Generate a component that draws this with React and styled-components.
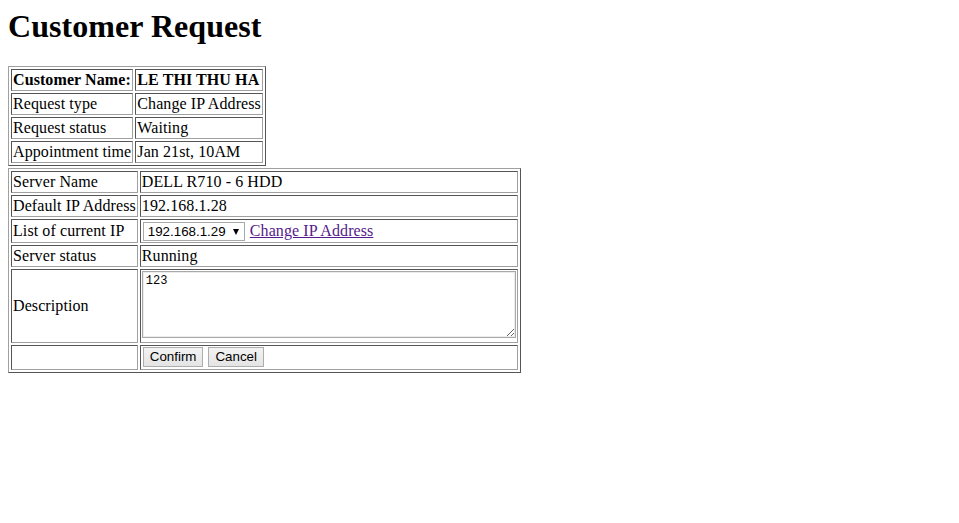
import React from "react";
import styled, { createGlobalStyle } from "styled-components";

const Global = createGlobalStyle`
  html, body { background: #fff; }
  body {
    margin: 8px;
    font-family: "Liberation Serif", "Times New Roman", serif;
    font-size: 16px;
    color: #000;
  }
`;

const Title = styled.h1`
  font-size: 32px;
  font-weight: bold;
  margin: 0 0 21px 0;
  line-height: 37px;
  letter-spacing: 0.05px;
`;

const Table = styled.table`
  border-style: solid;
  border-width: 1px;
  border-color: #a0a0a0 #555 #555 #a0a0a0;
  border-spacing: 2px;
  border-collapse: separate;
  font-size: 16px;
  letter-spacing: 0.09px;
  margin-top: ${(p) => p.$gap || "0"};
`;

const Cell = styled.td`
  border-style: solid;
  border-width: 1px;
  border-color: #555 #a0a0a0 #a0a0a0 #555;
  padding: 1px;
  line-height: 18px;
  font-weight: ${(p) => (p.$bold ? "bold" : "normal")};
  white-space: nowrap;
  vertical-align: middle;
`;

const SelectWrap = styled.span`
  position: relative;
  display: inline-block;
  vertical-align: middle;
  margin: 0 5px 0 1px;
  height: 19px;
`;

const Select = styled.select`
  appearance: none;
  -webkit-appearance: none;
  display: block;
  box-sizing: border-box;
  font-family: Arial, "Liberation Sans", sans-serif;
  font-size: 13.33px;
  letter-spacing: 0;
  height: 19px;
  width: 102px;
  border: 1px solid #a9a9a9;
  border-radius: 0;
  background: #fff;
  color: #000;
  padding: 0 0 0 4px;
  margin: 0;
`;

const Arrow = styled.span`
  position: absolute;
  right: 6px;
  top: 7px;
  width: 0;
  height: 0;
  border-left: 3.5px solid transparent;
  border-right: 3.5px solid transparent;
  border-top: 6px solid #000;
  pointer-events: none;
`;

const Link = styled.a`
  color: #551a8b;
  text-decoration: underline;
  vertical-align: middle;
`;

const TextArea = styled.textarea`
  display: block;
  box-sizing: border-box;
  width: 374px;
  height: 67px;
  margin: 0 0 3px 0;
  padding: 2px 3px;
  font-family: "Liberation Mono", "DejaVu Sans Mono", monospace;
  font-size: 12px;
  letter-spacing: 0;
  color: #000;
  border: 1px solid #a9a9a9;
  box-shadow: inset 0 0 0 1px #ececec;
  resize: both;
`;

const Button = styled.button`
  font-family: Arial, "Liberation Sans", sans-serif;
  font-size: 13.33px;
  letter-spacing: 0;
  height: 20px;
  padding: 0 6px;
  margin: 0 4px 1px 1px;
  border: 1px solid #adadad;
  border-radius: 0;
  background: linear-gradient(#f3f3f3, #e4e4e4);
  color: #000;
  vertical-align: middle;
`;

const Row = ({ label, children, bold }) => (
  <tr>
    <Cell $bold={bold}>{label}</Cell>
    <Cell $bold={bold}>{children}</Cell>
  </tr>
);

export default function App() {
  return (
    <>
      <Global />
      <Title>Customer Request</Title>
      <Table>
        <tbody>
          <Row label="Customer Name:" bold>LE THI THU HA</Row>
          <Row label="Request type">Change IP Address</Row>
          <Row label="Request status">Waiting</Row>
          <Row label="Appointment time">Jan 21st, 10AM</Row>
        </tbody>
      </Table>
      <Table $gap="2px">
        <tbody>
          <Row label="Server Name">DELL R710 - 6 HDD</Row>
          <Row label="Default IP Address">192.168.1.28</Row>
          <Row label="List of current IP">
            <SelectWrap>
              <Select defaultValue="192.168.1.29">
                <option>192.168.1.29</option>
                <option>192.168.1.30</option>
              </Select>
              <Arrow />
            </SelectWrap>
            <Link href="#">Change IP Address</Link>
          </Row>
          <Row label="Server status">Running</Row>
          <Row label="Description">
            <TextArea defaultValue="123" />
          </Row>
          <Row label="">
            <Button>Confirm</Button>
            <Button>Cancel</Button>
          </Row>
        </tbody>
      </Table>
    </>
  );
}
